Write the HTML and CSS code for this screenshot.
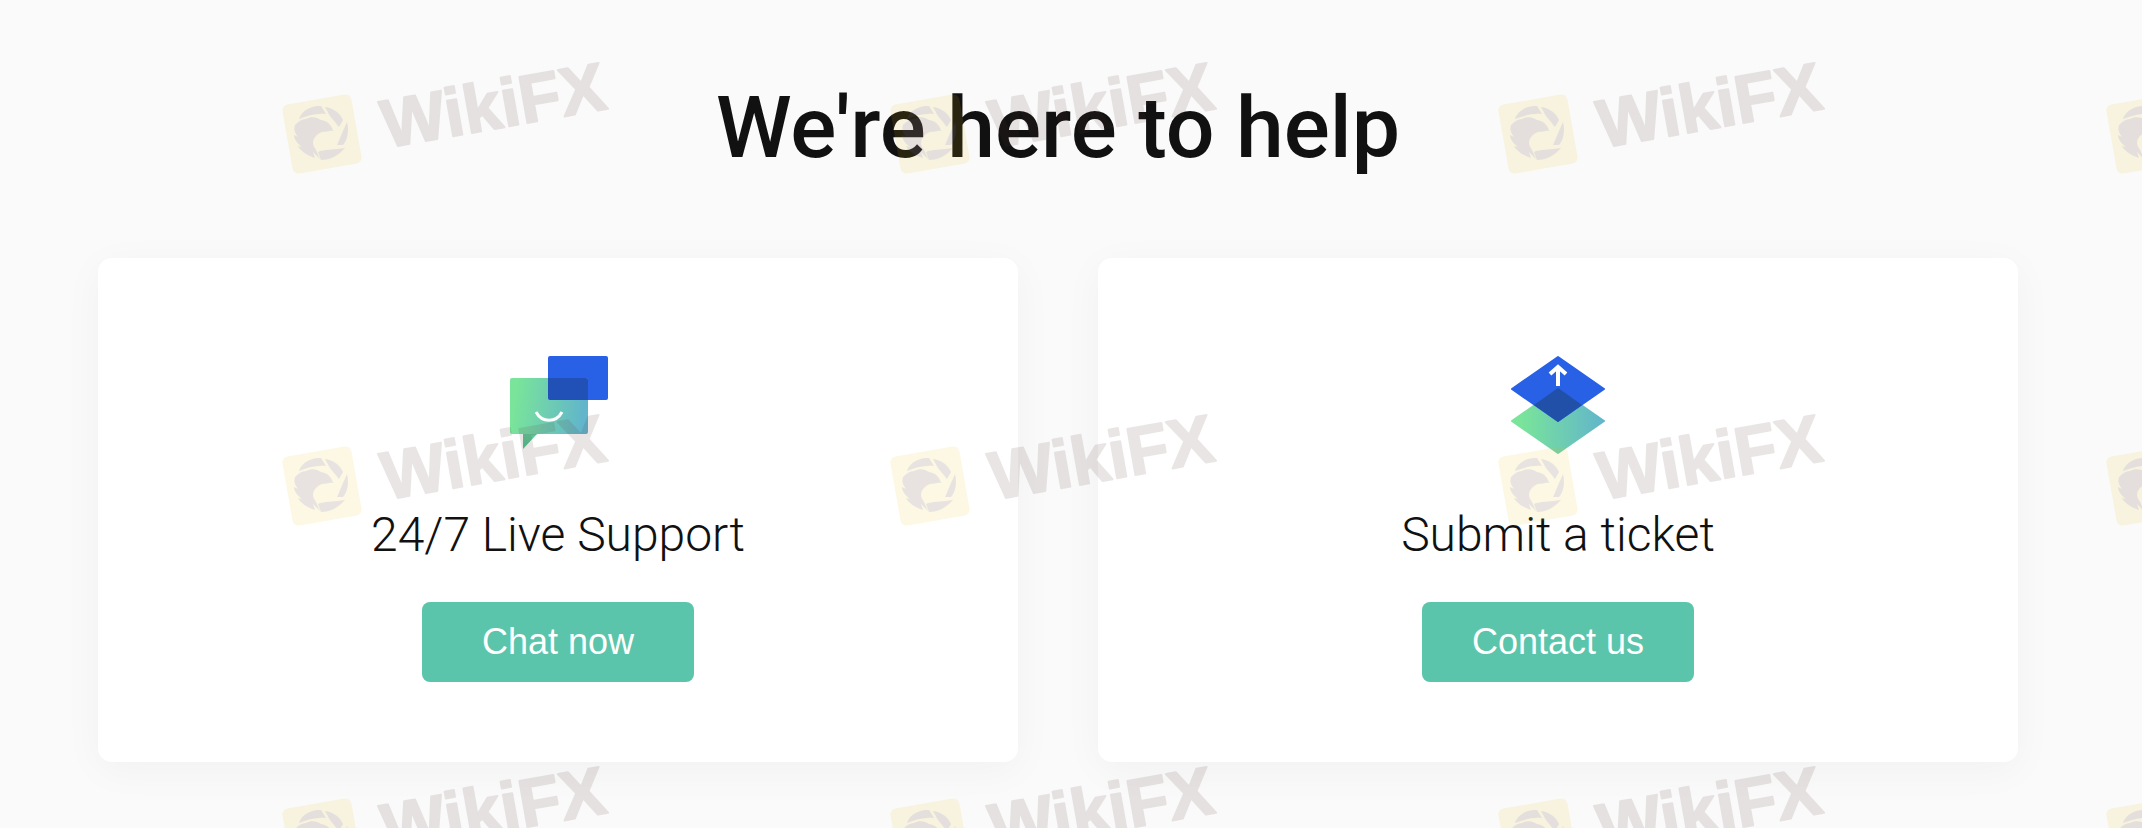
FILE: index.html
```
<!DOCTYPE html>
<html lang="en">
<head>
    <meta charset="UTF-8">
    <meta name="viewport" content="width=device-width, initial-scale=1.0">
    <title>We're here to help</title>
    <link rel="stylesheet" href="styles.css">
</head>
<body>

<main class="help">
    <h1>We're here to help</h1>

    <div class="cards">
        <section class="card">
            <svg class="card-icon" viewBox="0 0 100 100" aria-hidden="true">
                <defs>
                    <linearGradient id="bubble" x1="0" y1="0" x2="1" y2="0.1">
                        <stop offset="0.1" stop-color="#79e49a"/>
                        <stop offset="1" stop-color="#62b5cb"/>
                    </linearGradient>
                    <linearGradient id="tail" x1="0" y1="0" x2="0" y2="1">
                        <stop offset="0" stop-color="#5fc797"/>
                        <stop offset="1" stop-color="#4fc48e"/>
                    </linearGradient>
                </defs>
                <rect x="40" y="1" width="60" height="44" rx="2" fill="#2860e6"/>
                <rect x="2" y="23" width="78" height="56" rx="2" fill="url(#bubble)"/>
                <path d="M40 23h38a2 2 0 0 1 2 2v20H42a2 2 0 0 1-2-2z" fill="#2150b7"/>
                <path d="M15 79h14L15 94z" fill="url(#tail)"/>
                <path d="M28 57c6 11 20 11 26 0" fill="none" stroke="#fff" stroke-width="3"/>
            </svg>
            <h2>24/7 Live Support</h2>
            <button type="button">Chat now</button>
        </section>

        <section class="card">
            <svg class="card-icon" viewBox="0 0 100 100" aria-hidden="true">
                <defs>
                    <linearGradient id="layer" x1="0" y1="0" x2="1" y2="0">
                        <stop offset="0.1" stop-color="#79e49a"/>
                        <stop offset="1" stop-color="#62b5cb"/>
                    </linearGradient>
                </defs>
                <path d="M50 34L96 66L50 98L4 66z" fill="url(#layer)" stroke="url(#layer)" stroke-width="2" stroke-linejoin="round"/>
                <path d="M50 2L96 34L50 66L4 34z" fill="#2860e6" stroke="#2860e6" stroke-width="2" stroke-linejoin="round"/>
                <path d="M50 33L74 50L50 67L26 50z" fill="#2150a8"/>
                <path d="M50 31V12M42 19l8-7 8 7" fill="none" stroke="#fff" stroke-width="4"/>
            </svg>
            <h2>Submit a ticket</h2>
            <button type="button">Contact us</button>
        </section>
    </div>
</main>

<svg width="0" height="0" class="defs" aria-hidden="true">
    <symbol id="badge" viewBox="0 0 110 150">
        <rect x="27" y="59" width="70" height="70" rx="6" transform="rotate(-10 62 94)" fill="#e6be00" opacity="0.11"/>
        <g fill="#6a5ed8" opacity="0.13">
            <path d="M39 79C41 72 50 65 61 66L66 74C56 73 47 76 39 79z"/>
            <path d="M65 67C73 68 80 73 83 80L79 87L70 76z"/>
            <path d="M87 82C89 90 88 99 83 105L77 105z"/>
            <path d="M85 108C78 116 70 120 61 120L58 112C64 109 75 110 85 108z"/>
            <path d="M35 85C38 82 42 79 46 79C51 76 57 77 61 80C67 81 71 84 73 91C69 90 67 92 62 92C57 94 53 98 53 103C53 106 55 108 56 110L60 119L53 112L55 118C46 115 40 110 38 106L42 107C37 103 34 99 34 95L38 97C34 92 34 89 35 85z"/>
        </g>
    </symbol>
</svg>

<div class="watermarks" id="watermarks" aria-hidden="true"></div>

<script>
    const columns = 4;
    const rows = 3;
    let marks = '';

    for (let i = 0; i < columns * rows; i++) {
        // the last column only has room for the badge
        const hasName = i % columns < columns - 1;
        marks += `<svg class="mark" viewBox="0 0 380 150">
            <use href="#badge" width="110" height="150"/>
            ${hasName ? '<text transform="translate(126 108) rotate(-10)">WikiFX</text>' : ''}
        </svg>`;
    }

    document.getElementById("watermarks").innerHTML = marks;
</script>

</body>
</html>
```
FILE: styles.css
```
body {
    position: relative;
    min-height: 100vh;
    margin: 0;
    overflow: hidden;
    font-family: Roboto, "Liberation Sans", sans-serif;
    color: #111;
    background-color: #fafafa;
}
.help {
    padding: 74px 124px 66px 98px;
}
h1 {
    margin: 0 0 76px;
    font-size: 86px;
    font-weight: 500;
    line-height: 108px;
    text-align: center;
}
.cards {
    display: grid;
    grid-template-columns: 1fr 1fr;
    gap: 80px;
}
.card {
    display: flex;
    flex-direction: column;
    align-items: center;
    padding: 97px 40px 80px;
    background: white;
    border-radius: 14px;
    box-shadow: 0 8px 40px rgba(0, 0, 0, 0.04);
}
.card-icon {
    width: 100px;
    height: 100px;
}
h2 {
    margin: 48px 0 35px;
    font-size: 48px;
    font-weight: 300;
    line-height: 64px;
}
button {
    width: 272px;
    height: 80px;
    padding: 0;
    font-family: "Liberation Sans", Arial, sans-serif;
    font-size: 36px;
    color: white;
    background: #5bc5ab;
    border: none;
    border-radius: 8px;
    cursor: pointer;
}
button:hover {
    background: #49b298;
}
.defs {
    position: absolute;
}
.watermarks {
    position: absolute;
    inset: 0;
    display: grid;
    grid-template-columns: repeat(4, 608px);
    grid-auto-rows: 352px;
    padding: 40px 0 0 260px;
    overflow: hidden;
    pointer-events: none;
}
.mark {
    width: 380px;
    height: 150px;
}
.mark text {
    font-family: "Liberation Sans", Arial, sans-serif;
    font-size: 68px;
    font-weight: 700;
    fill: #5a3232;
    stroke: #5a3232;
    stroke-width: 2px;
    stroke-linejoin: round;
    opacity: 0.12;
}
```
